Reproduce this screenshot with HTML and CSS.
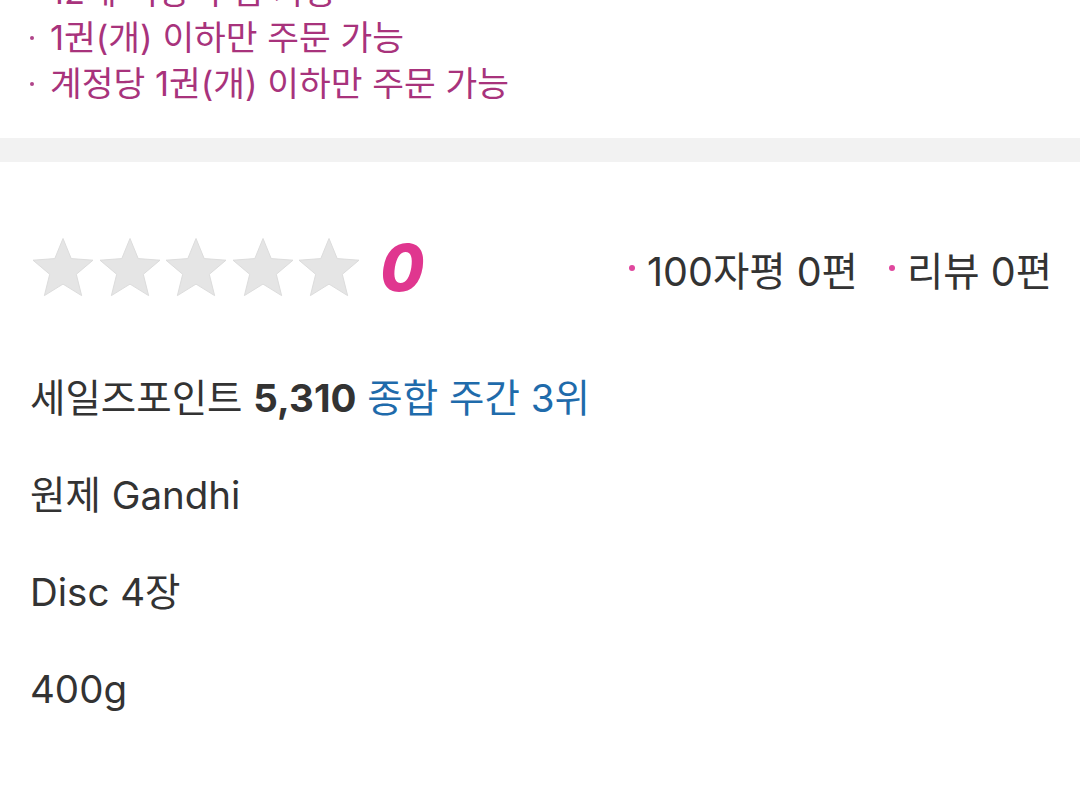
FILE: index.html
```html
<!DOCTYPE html>
<html lang="ko">
<head>
<meta charset="utf-8">
<link rel="stylesheet" href="styles.css">
</head>
<body>
<section class="notice">
  <ul class="notice-list">
    <li>12세 이상 구입 가능</li>
    <li>1권(개) 이하만 주문 가능</li>
    <li>계정당 1권(개) 이하만 주문 가능</li>
  </ul>
</section>
<div class="divider"></div>
<section class="info">
  <div class="rating-row">
    <div class="rating">
      <div class="stars">
        <svg class="star" viewBox="0 0 66 64"><path d="M33 2.5 L41.2 22.6 L63 24.2 L46.3 38.3 L51.6 59.6 L33 48.1 L14.4 59.6 L19.7 38.3 L3 24.2 L24.8 22.6 Z"/></svg>
        <svg class="star" viewBox="0 0 66 64"><path d="M33 2.5 L41.2 22.6 L63 24.2 L46.3 38.3 L51.6 59.6 L33 48.1 L14.4 59.6 L19.7 38.3 L3 24.2 L24.8 22.6 Z"/></svg>
        <svg class="star" viewBox="0 0 66 64"><path d="M33 2.5 L41.2 22.6 L63 24.2 L46.3 38.3 L51.6 59.6 L33 48.1 L14.4 59.6 L19.7 38.3 L3 24.2 L24.8 22.6 Z"/></svg>
        <svg class="star" viewBox="0 0 66 64"><path d="M33 2.5 L41.2 22.6 L63 24.2 L46.3 38.3 L51.6 59.6 L33 48.1 L14.4 59.6 L19.7 38.3 L3 24.2 L24.8 22.6 Z"/></svg>
        <svg class="star" viewBox="0 0 66 64"><path d="M33 2.5 L41.2 22.6 L63 24.2 L46.3 38.3 L51.6 59.6 L33 48.1 L14.4 59.6 L19.7 38.3 L3 24.2 L24.8 22.6 Z"/></svg>
      </div>
      <span class="score">0</span>
    </div>
    <ul class="counts">
      <li>100자평 0편</li>
      <li>리뷰 0편</li>
    </ul>
  </div>
  <p class="line sales">세일즈포인트 <strong>5,310</strong> <a class="rank">종합 주간 3위</a></p>
  <p class="line">원제 Gandhi</p>
  <p class="line">Disc 4장</p>
  <p class="line">400g</p>
</section>
</body>
</html>
```
FILE: styles.css
```css
html, body {
  margin: 0;
  padding: 0;
  background: #fff;
}
body {
  font-family: Inter, "Noto Sans CJK KR", sans-serif;
  color: #333;
  width: 1080px;
  height: 800px;
  overflow: hidden;
}
.notice {
  margin-top: -31px;
  padding: 0 30px 31px;
}
.notice-list {
  list-style: none;
  margin: 0;
  padding: 0;
}
.notice-list li {
  font-size: 34.5px;
  line-height: 46px;
  height: 46px;
  color: #a8337c;
  display: flex;
  align-items: center;
}
.notice-list li::before {
  content: "";
  width: 4px;
  height: 4px;
  border-radius: 50%;
  background: #b0448a;
  margin: 0 16px 0 0;
  flex: none;
}
.divider {
  height: 24px;
  background: #f2f2f2;
}
.info {
  padding: 73px 28px 0 30px;
  display: flex;
  flex-direction: column;
}
.rating-row {
  display: flex;
  align-items: center;
  justify-content: space-between;
  height: 66px;
}
.rating {
  display: flex;
  align-items: center;
}
.stars {
  display: flex;
  gap: 0.5px;
}
.star {
  width: 66px;
  height: 64px;
  display: block;
}
.star path {
  fill: #e5e5e5;
  stroke: #dcdcdc;
  stroke-width: 1;
  stroke-linejoin: round;
}
.score {
  font-family: Inter, sans-serif;
  font-size: 64px;
  font-weight: 800;
  font-style: italic;
  color: #e0368f;
  line-height: 66px;
  margin-left: 18px;
}
.counts {
  list-style: none;
  margin: 0;
  padding: 0;
  display: flex;
  gap: 31px;
  font-size: 39.5px;
  color: #333;
}
.counts li {
  display: flex;
  align-items: center;
}
.counts li::before {
  content: "";
  width: 6px;
  height: 6px;
  border-radius: 50%;
  background: #e0479e;
  margin-right: 12px;
}
.line {
  margin: 47px 0 0;
  font-size: 38.5px;
  line-height: 50px;
  height: 50px;
}
.line.sales {
  margin-top: 72px;
}
.line strong {
  font-weight: 700;
  color: #333;
}
.rank {
  color: #1f6bab;
  text-decoration: none;
}
```
